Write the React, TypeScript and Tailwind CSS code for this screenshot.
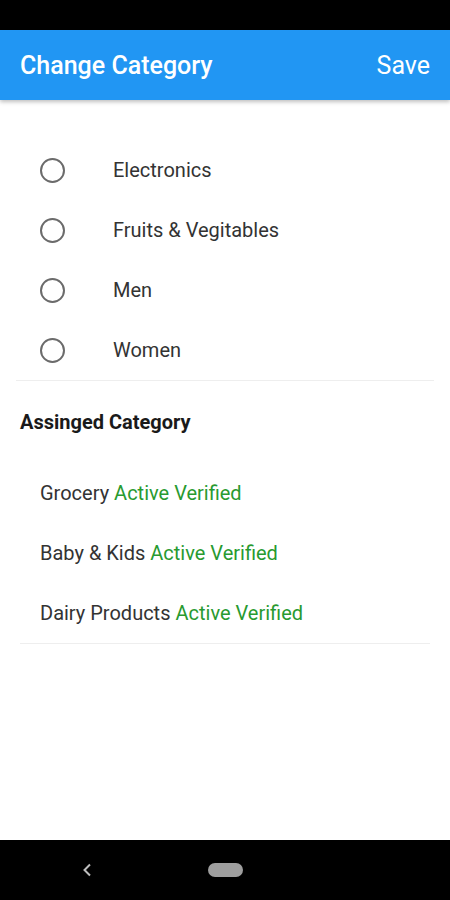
import { useState } from "react";

const OPTIONS = ["Electronics", "Fruits & Vegitables", "Men", "Women"];
const ASSIGNED = ["Grocery", "Baby & Kids", "Dairy Products"];

function Radio({ checked }: { checked: boolean }) {
  return (
    <span className="grid place-items-center w-[25px] h-[25px] rounded-full border-2 border-[#6b6b6b]">
      {checked && <span className="w-[13px] h-[13px] rounded-full bg-[#2196f3]" />}
    </span>
  );
}

export default function App() {
  const [picked, setPicked] = useState<string | null>(null);

  return (
    <div className="w-[450px] h-[900px] flex flex-col bg-white font-['Roboto',sans-serif] overflow-hidden">
      {/* status bar */}
      <div className="h-[30px] bg-black shrink-0" />

      {/* app bar */}
      <div className="h-[70px] shrink-0 bg-[#2196f3] flex items-center justify-between pl-5 pr-5 shadow-[0_2px_4px_rgba(0,0,0,0.25)] relative z-10">
        <span className="text-white text-[25px] font-medium leading-none">Change Category</span>
        <span className="text-white text-[25px] leading-none">Save</span>
      </div>

      <div className="flex-1 flex flex-col">
        <div className="pt-[40px] px-4">
          {OPTIONS.map((o) => (
            <button
              key={o}
              onClick={() => setPicked(o)}
              className="w-full h-[60px] flex items-center text-left"
            >
              <span className="w-[97px] pl-6 flex items-center">
                <Radio checked={picked === o} />
              </span>
              <span className="text-[20px] text-[#333333]">{o}</span>
            </button>
          ))}
          <div className="h-px bg-[#eeeeee]" />
        </div>

        <div className="px-5 pt-[29px]">
          <div className="text-[20px] font-bold text-[#1a1a1a] leading-[24px]">Assinged Category</div>
          <div className="pt-[29px]">
            {ASSIGNED.map((a) => (
              <div key={a} className="h-[60px] flex items-center pl-5 text-[20px] text-[#333333]">
                <span>
                  {a} <span className="text-[#289a30]">Active Verified</span>
                </span>
              </div>
            ))}
          </div>
          <div className="h-px bg-[#eeeeee]" />
        </div>
      </div>

      {/* navigation bar */}
      <div className="h-[60px] shrink-0 bg-black relative flex items-center">
        <svg className="absolute left-[81px] top-[23px]" width="12" height="14" viewBox="0 0 12 14">
          <path d="M9 1.5 L3.5 7 L9 12.5" fill="none" stroke="#bdbdbd" strokeWidth="2" />
        </svg>
        <span className="absolute left-[208px] top-[23px] w-[35px] h-[14px] rounded-full bg-[#9e9e9e]" />
      </div>
    </div>
  );
}
